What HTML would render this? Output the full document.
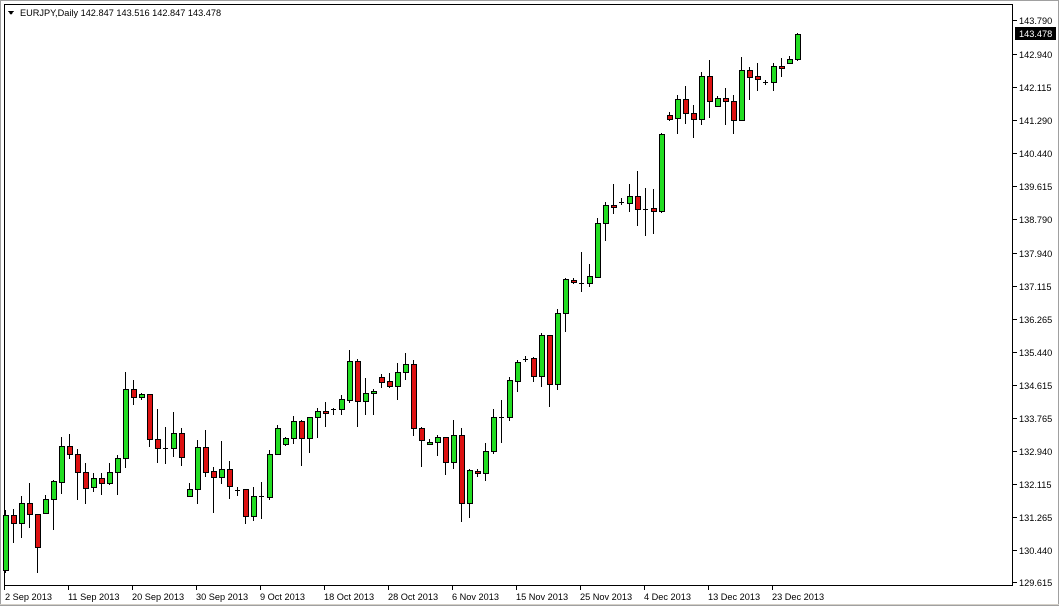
<!DOCTYPE html>
<html><head><meta charset="utf-8"><style>
html,body{margin:0;padding:0;background:#fff;}
body{width:1059px;height:606px;overflow:hidden;position:relative;font-family:"Liberation Sans",sans-serif;}
svg{position:absolute;left:0;top:0;}
text{font-family:"Liberation Sans",sans-serif;font-size:9.2px;fill:#000;}
</style></head><body>
<svg id="s" width="1059" height="606" xmlns="http://www.w3.org/2000/svg" shape-rendering="crispEdges">
<rect x="0.5" y="0.5" width="1058" height="605" fill="#fff" stroke="#a0a0a0"/>
<line x1="0" y1="604.5" x2="1059" y2="604.5" stroke="#d4d0c8"/>
<rect x="4.5" y="4.5" width="1008" height="581" fill="#fff" stroke="#000"/>
<path d="M8 11 L14 11 L11 15 Z" fill="#000"/>
<text x="20" y="16">EURJPY,Daily  142.847 143.516 142.847 143.478</text>
<g id="c"></g>
<g id="ax" stroke="#000"></g>
<rect x="1015" y="27" width="41" height="13" fill="#000"/>
<text x="1019" y="24">143.790</text>
<text x="1019" y="37" style="fill:#fff">143.478</text>
<text x="1019" y="58">142.940</text>
<text x="1019" y="91">142.115</text>
<text x="1019" y="124">141.290</text>
<text x="1019" y="157">140.440</text>
<text x="1019" y="190">139.615</text>
<text x="1019" y="223">138.790</text>
<text x="1019" y="257">137.940</text>
<text x="1019" y="290">137.115</text>
<text x="1019" y="323">136.265</text>
<text x="1019" y="356">135.440</text>
<text x="1019" y="389">134.615</text>
<text x="1019" y="422">133.765</text>
<text x="1019" y="455">132.940</text>
<text x="1019" y="488">132.115</text>
<text x="1019" y="521">131.265</text>
<text x="1019" y="554">130.440</text>
<text x="1019" y="586">129.615</text>
<text x="5" y="600">2 Sep 2013</text>
<text x="68" y="600">11 Sep 2013</text>
<text x="132" y="600">20 Sep 2013</text>
<text x="196" y="600">30 Sep 2013</text>
<text x="260" y="600">9 Oct 2013</text>
<text x="324" y="600">18 Oct 2013</text>
<text x="388" y="600">28 Oct 2013</text>
<text x="452" y="600">6 Nov 2013</text>
<text x="516" y="600">15 Nov 2013</text>
<text x="580" y="600">25 Nov 2013</text>
<text x="644" y="600">4 Dec 2013</text>
<text x="708" y="600">13 Dec 2013</text>
<text x="772" y="600">23 Dec 2013</text>
</svg>
<script>
var d=[
[510,572,515,570,'g'],[509,542,515,523,'r'],[496,537,503,523,'g'],[483,527,503,514,'r'],[514,572,514,547,'r'],
[495,513,499,513,'g'],[480,529,481,499,'g'],[437,493,446,482,'g'],[434,458,446,454,'r'],[449,499,454,472,'r'],
[463,503,472,488,'r'],[473,491,478,487,'g'],[473,494,478,483,'r'],[463,484,472,483,'g'],[455,494,458,472,'g'],
[372,467,389,458,'g'],[380,404,389,397,'r'],[393,399,394,397,'g'],[394,446,394,439,'r'],[409,462,439,448,'r'],
[427,463,448,448,'d'],[412,456,433,448,'g'],[428,465,433,457,'r'],[483,496,489,496,'g'],[440,503,447,489,'g'],
[430,476,447,472,'r'],[467,512,471,477,'r'],[441,483,469,477,'g'],[461,498,469,486,'r'],[487,495,490,490,'d'],
[489,523,489,516,'r'],[487,520,496,516,'g'],[482,518,496,496,'d'],[450,499,454,497,'g'],[425,454,428,454,'g'],
[437,445,438,444,'g'],[416,443,421,438,'g'],[420,465,421,438,'r'],[417,452,417,438,'g'],[408,437,411,417,'g'],
[402,426,411,413,'r'],[408,414,409,409,'d'],[395,414,399,409,'g'],[350,402,361,400,'g'],[359,426,361,401,'r'],
[378,414,393,401,'g'],[389,414,391,393,'g'],[374,387,377,382,'r'],[373,387,381,386,'r'],[363,399,372,386,'g'],
[353,379,364,372,'g'],[360,435,364,428,'r'],[427,466,428,440,'r'],[439,444,442,444,'g'],[435,455,437,442,'g'],
[437,474,437,462,'r'],[420,468,435,462,'g'],[428,521,435,503,'r'],[469,517,470,503,'g'],[469,476,471,473,'r'],
[443,480,451,473,'g'],[409,453,417,451,'g'],[400,442,417,417,'d'],[377,420,380,417,'g'],[360,391,362,381,'g'],
[356,361,359,359,'d'],[357,381,358,376,'r'],[333,386,335,376,'g'],[335,406,335,384,'r'],[309,389,313,384,'g'],
[278,331,279,313,'g'],[278,283,280,282,'r'],[252,291,283,283,'d'],[264,286,276,283,'g'],[218,277,223,277,'g'],
[202,240,205,223,'g'],[184,213,205,207,'r'],[198,204,202,202,'d'],[184,211,196,203,'g'],[171,225,196,209,'r'],
[188,235,209,209,'d'],[189,233,208,211,'r'],[133,212,134,211,'g'],[112,120,115,119,'r'],[95,133,99,118,'g'],
[86,123,99,113,'r'],[105,137,113,119,'r'],[72,124,76,119,'g'],[60,117,76,101,'r'],[96,106,98,106,'g'],
[88,124,98,101,'r'],[95,133,101,120,'r'],[57,120,70,120,'g'],[67,99,70,77,'r'],[63,90,76,79,'r'],
[80,84,82,82,'d'],[63,90,66,82,'g'],[58,76,66,68,'r'],[56,63,59,63,'g'],[33,60,34,59,'g']];
var h='';
d.forEach(function(c,i){var x=5+8*i;
h+='<line x1="'+(x+0.5)+'" y1="'+c[0]+'" x2="'+(x+0.5)+'" y2="'+(c[1]+1)+'" stroke="#000"/>';
if(c[4]=='d'){h+='<line x1="'+(x-2)+'" y1="'+(c[2]+0.5)+'" x2="'+(x+3)+'" y2="'+(c[2]+0.5)+'" stroke="#000"/>';}
else{var t=c[2],b=Math.max(c[3],c[2]+2);
h+='<rect x="'+(x-2+0.5)+'" y="'+(t+0.5)+'" width="5" height="'+(b-t)+'" fill="'+(c[4]=='g'?'#22dd22':'#dd1111')+'" stroke="#000"/>';}
});
document.getElementById('c').innerHTML=h;
var a='';
[4,68,132,196,260,324,388,452,516,580,644,708,772].forEach(function(x){a+='<line x1="'+(x+0.5)+'" y1="586" x2="'+(x+0.5)+'" y2="590"/>';});
[20,54,87,120,153,186,219,253,286,319,352,385,418,451,484,517,550,582].forEach(function(y){a+='<line x1="1013" y1="'+(y+0.5)+'" x2="1017" y2="'+(y+0.5)+'"/>';});
document.getElementById('ax').innerHTML=a;
</script>
</body></html>
